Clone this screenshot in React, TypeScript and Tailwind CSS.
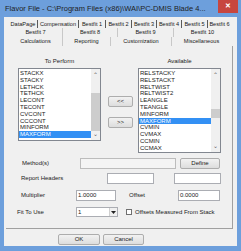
import React from 'react'

const row1 = [
  ['DataPage', 29],
  ['Compensation', 41],
  ['Bestfit 1', 27],
  ['Bestfit 2', 26],
  ['Bestfit 3', 25],
  ['Bestfit 4', 25],
  ['Bestfit 5', 26],
  ['Bestfit 6', 23],
] as const

const row2 = [
  ['Bestfit 7', 54],
  ['Bestfit 8', 55],
  ['Bestfit 9', 56],
  ['Bestfit 10', 57],
] as const

const row3 = [
  ['Calculations', 54],
  ['Reporting', 48],
  ['Customization', 61],
  ['Miscellaneous', 59],
] as const

const toPerform = ['STACKX', 'STACKY', 'LETHCK', 'TETHCK', 'LECONT', 'TECONT', 'CVCONT', 'CCCONT', 'MINFORM', 'MAXFORM']
const available = ['RELSTACKY', 'RELSTACKT', 'RELTWIST', 'RELTWIST2', 'LEANGLE', 'TEANGLE', 'MINFORM', 'MAXFORM', 'CVMIN', 'CVMAX', 'CCMIN', 'CCMAX']

function Scrollbar({ thumbTop, thumbHeight }: { thumbTop: number; thumbHeight: number }) {
  return (
    <div className="relative w-[9px] h-full bg-[#f0f0f0] flex flex-col items-center justify-between py-[1px] text-[6px] leading-none text-[#606060]">
      <span className="mt-[2px]">&#8963;</span>
      <div
        className="absolute left-0 w-[9px] bg-[#cdcdcd]"
        style={{ top: thumbTop, height: thumbHeight }}
      />
      <span className="mb-[2px]">&#8964;</span>
    </div>
  )
}

function ListBox({
  items,
  selected,
  height,
  thumbTop,
  thumbHeight,
}: {
  items: string[]
  selected: string
  height: number
  thumbTop: number
  thumbHeight: number
}) {
  return (
    <div className="w-[83px] bg-white border border-[#828790] flex" style={{ height }}>
      <div className="flex-1 pt-[1px] overflow-hidden">
        {items.map((it) => (
          <div
            key={it}
            className={
              'h-[6.8px] leading-[6.8px] pl-[1px] text-[6px] ' +
              (it === selected ? 'bg-[#3390f4] text-white' : 'text-[#1a1a1a]')
            }
          >
            {it}
          </div>
        ))}
      </div>
      <Scrollbar thumbTop={thumbTop} thumbHeight={thumbHeight} />
    </div>
  )
}

function Button({ label, w }: { label: string; w: number }) {
  return (
    <div
      className="h-[11px] border border-[#adadad] rounded-[2px] bg-gradient-to-b from-[#f2f2f2] to-[#dddddd] flex items-center justify-center text-[6px] text-[#1a1a1a]"
      style={{ width: w }}
    >
      {label}
    </div>
  )
}

function TextBox({ w, value, disabled }: { w: number; value?: string; disabled?: boolean }) {
  return (
    <div
      className={
        'h-[11px] border flex items-start pl-[1px] text-[6px] leading-[8px] text-[#1a1a1a] ' +
        (disabled ? 'bg-[#f4f4f4] border-[#bcbcbc]' : 'bg-white border-[#abadb3]')
      }
      style={{ width: w }}
    >
      {value}
    </div>
  )
}

export default function App() {
  return (
    <div
      className="w-[241px] h-[251px] bg-[#6d9fdc] flex flex-col overflow-hidden"
      style={{ fontFamily: '"Liberation Sans", Arial, sans-serif' }}
    >
      {/* Title bar */}
      <div className="h-[17px] flex items-start shrink-0">
        <div className="flex-1 pl-[5px] pt-[4px] text-[7.5px] leading-[10px] text-[#1e1e1e] whitespace-nowrap overflow-hidden">
          Flavor File - C:\Program Files (x86)\WAI\PC-DMIS Blade 4...
        </div>
        <div className="w-[20px] h-[13px] mr-[3px] bg-[#c7463f] flex items-center justify-center text-white text-[7px] font-bold">
          ✕
        </div>
      </div>

      {/* Body */}
      <div className="flex-1 mx-[4px] mb-[5px] bg-[#f0f0f0] flex flex-col">
        {/* Tabs */}
        <div className="pt-[3px] pl-[5px] text-[5.6px] text-[#1a1a1a] whitespace-nowrap">
          <div className="flex h-[8px] items-center">
            {row1.map(([t, w], i) => (
              <div
                key={t}
                className={'text-center leading-[8px] ' + (i < row1.length - 1 ? 'border-r border-[#5a5a5a]' : '')}
                style={{ width: w }}
              >
                {t}
              </div>
            ))}
          </div>
          <div className="flex h-[9px] items-center">
            {row2.map(([t, w], i) => (
              <div
                key={t}
                className={'text-center leading-[9px] ' + (i < row2.length - 1 ? 'border-r border-[#c8c8c8]' : '')}
                style={{ width: w }}
              >
                {t}
              </div>
            ))}
          </div>
          <div className="flex h-[9px] items-center">
            {row3.map(([t, w], i) => (
              <div
                key={t}
                className={'text-center leading-[9px] ' + (i < row3.length - 1 ? 'border-r border-[#c8c8c8]' : '')}
                style={{ width: w }}
              >
                {t}
              </div>
            ))}
          </div>
        </div>

        {/* Tab page */}
        <div className="ml-[2px] mr-[4px] h-[183px] border-r border-b border-[#a0a0a0] flex flex-col text-[6px] text-[#1a1a1a]">
          <div className="flex pt-[11px]">
            <div className="ml-[12px] w-[83px] text-center leading-[8px]">To Perform</div>
            <div className="ml-[37px] w-[83px] text-center leading-[8px]">Available</div>
          </div>
          <div className="flex mt-[3px] items-start">
            <div className="ml-[12px]">
              <ListBox items={toPerform} selected="MAXFORM" height={73} thumbTop={24} thumbHeight={38} />
            </div>
            <div className="ml-[7px] w-[25px] flex flex-col gap-[10px] pt-[28px]">
              <Button label="<<" w={25} />
              <Button label=">>" w={25} />
            </div>
            <div className="ml-[5px]">
              <ListBox items={available} selected="MAXFORM" height={85} thumbTop={40} thumbHeight={9} />
            </div>
          </div>

          {/* Method(s) */}
          <div className="flex items-center mt-[5px] h-[11px]">
            <div className="ml-[16px] w-[58px]">Method(s)</div>
            <TextBox w={96} disabled />
            <div className="ml-[4px]">
              <Button label="Define" w={40} />
            </div>
          </div>

          {/* Report Headers */}
          <div className="flex items-center mt-[4px] h-[11px]">
            <div className="ml-[15px] w-[86px]">Report Headers</div>
            <TextBox w={47} />
            <div className="ml-[20px]">
              <TextBox w={47} />
            </div>
          </div>

          {/* Multiplier / Offset */}
          <div className="flex items-center mt-[5px] h-[12px]">
            <div className="ml-[15px] w-[55px]">Multiplier</div>
            <TextBox w={40} value="1.0000" />
            <div className="ml-[13px] w-[49px]">Offset</div>
            <TextBox w={42} value="0.0000" />
          </div>

          {/* Fit To Use */}
          <div className="flex items-center mt-[6px] h-[10px]">
            <div className="ml-[11px] w-[59px]">Fit To Use</div>
            <div className="w-[42px] h-[10px] bg-white border border-[#abadb3] flex items-start justify-between text-[6px] leading-[8px]">
              <span className="pl-[1px]">1</span>
              <span className="w-[8px] h-full bg-[#f0f0f0] border-l border-[#d0d0d0] flex items-center justify-center">
                <svg width="5" height="3" viewBox="0 0 5 3">
                  <path d="M0 0 L5 0 L2.5 3 Z" fill="#222" />
                </svg>
              </span>
            </div>
            <div className="ml-[8px] w-[6px] h-[6px] bg-white border border-[#707070]" />
            <div className="ml-[3px]">Offsets Measured From Stack</div>
          </div>
        </div>

        {/* Dialog buttons */}
        <div className="flex mt-[5px] pl-[54px] gap-[3px]">
          <Button label="OK" w={42} />
          <Button label="Cancel" w={41} />
        </div>
      </div>
    </div>
  )
}
